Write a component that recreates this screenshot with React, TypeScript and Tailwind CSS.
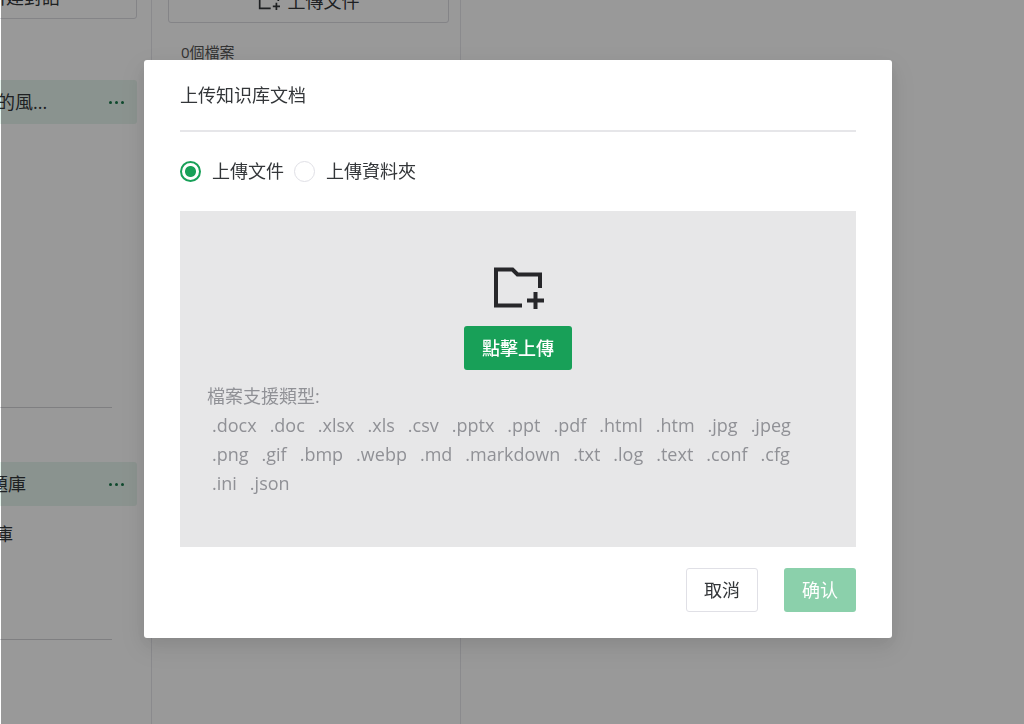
import React, { useState } from "react";

const FILE_TYPES = [
  ".docx", ".doc", ".xlsx", ".xls", ".csv", ".pptx", ".ppt", ".pdf", ".html", ".htm", ".jpg", ".jpeg",
  ".png", ".gif", ".bmp", ".webp", ".md", ".markdown", ".txt", ".log", ".text", ".conf", ".cfg",
  ".ini", ".json",
];

function FolderAddIcon({ className }: { className?: string }) {
  return (
    <svg className={className} viewBox="0 0 52 44" fill="none" stroke="currentColor" strokeWidth={4} aria-hidden="true">
      <path d="M30 39.5H4V3.5h16.5l5 5H48V22" />
      <path d="M43.5 26v17M35 34.5h17" />
    </svg>
  );
}

function MoreButton() {
  return (
    <button type="button" aria-label="More" className="flex items-center gap-[3px] text-[#18794a]">
      <span className="size-[3px] rounded-full bg-current" />
      <span className="size-[3px] rounded-full bg-current" />
      <span className="size-[3px] rounded-full bg-current" />
    </button>
  );
}

function Sidebar() {
  return (
    <aside className="flex w-[152px] shrink-0 justify-end overflow-hidden border-r border-[#e6e6eb] pr-[14px]">
      <div className="-mt-[25px] flex w-[226px] shrink-0 flex-col">
        <button type="button" className="h-11 rounded-[3px] border border-[#dcdce2] text-lg">
          新建對話
        </button>
        <div className="mt-[61px] flex h-11 items-center justify-between rounded-[3px] bg-[#e7f5ee] pr-[13px] pl-[86px]">
          <span>的風...</span>
          <MoreButton />
        </div>
        <hr className="mt-[283px] mr-[25px] border-[#d4d4d8]" />
        <div className="mt-[54px] flex h-11 items-center justify-between rounded-[3px] bg-[#e7f5ee] pr-[13px] pl-[79px]">
          <span>題庫</span>
          <MoreButton />
        </div>
        <div className="mt-[6px] flex h-11 items-center pl-[84px]">庫</div>
        <hr className="mt-[83px] mr-[25px] border-[#d4d4d8]" />
      </div>
    </aside>
  );
}

function FilePanel() {
  return (
    <section className="w-[309px] shrink-0 border-r border-[#e6e6eb] pr-[11px] pl-4">
      <button
        type="button"
        className="-mt-[21px] flex h-11 w-full items-center justify-center gap-2 rounded-[3px] border border-[#dcdce2] text-lg"
      >
        <FolderAddIcon className="h-5 w-[22px]" />
        上傳文件
      </button>
      <p className="mt-[18px] pl-[13px] text-[15px] leading-[22px] text-[#555]">0個檔案</p>
    </section>
  );
}

interface UploadModalProps {
  mode: string;
  onModeChange: (mode: string) => void;
}

function UploadModal({ mode, onModeChange }: UploadModalProps) {
  const radioClass =
    "size-[21px] appearance-none rounded-full border border-[#e0e0e6] bg-white checked:border-2 checked:border-[#18a058] checked:bg-[radial-gradient(circle,#18a058_5px,white_6px)]";

  return (
    <div className="fixed inset-y-0 right-0 left-px overflow-y-auto bg-black/40 pt-[60px] pr-[132px] pl-[143px]">
      <div
        role="dialog"
        aria-labelledby="upload-title"
        className="rounded-[3px] bg-white px-9 pt-[22px] pb-[26px] shadow-[0_9px_28px_8px_rgba(0,0,0,0.05),0_6px_16px_0_rgba(0,0,0,0.08)]"
      >
        <h2 id="upload-title" className="border-b-2 border-[#e6e6e9] pb-[22px] leading-[26px]">
          上传知识库文档
        </h2>

        <div className="mt-[25px] flex items-center gap-[10px] leading-[28px]">
          <label className="flex items-center gap-[11px]">
            <input
              type="radio"
              name="mode"
              className={radioClass}
              checked={mode === "file"}
              onChange={() => onModeChange("file")}
            />
            上傳文件
          </label>
          <label className="flex items-center gap-[11px]">
            <input
              type="radio"
              name="mode"
              className={radioClass}
              checked={mode === "folder"}
              onChange={() => onModeChange("folder")}
            />
            上傳資料夾
          </label>
        </div>

        <div className="mt-[26px] flex flex-col items-center bg-[#e7e7e8] px-[27px] pt-[55px] pb-[49px]">
          <FolderAddIcon className="h-11 w-[52px] text-[#27272a]" />
          <button type="button" className="mt-4 h-11 rounded-[3px] bg-[#18a058] px-[18px] font-medium text-white">
            點擊上傳
          </button>
          <div className="mt-3 w-full leading-[29px] text-[#909196]">
            <p>檔案支援類型:</p>
            <ul className="flex flex-wrap gap-x-[13px] px-[5px]">
              {FILE_TYPES.map((type) => (
                <li key={type}>{type}</li>
              ))}
            </ul>
          </div>
        </div>

        <div className="mt-[21px] flex justify-end gap-[26px]">
          <button type="button" className="h-11 rounded-[3px] border border-[#e0e0e6] px-[17px]">
            取消
          </button>
          <button type="button" disabled className="h-11 rounded-[3px] bg-[#8bd0ab] px-[18px] text-white">
            确认
          </button>
        </div>
      </div>
    </div>
  );
}

export default function App() {
  const [mode, setMode] = useState("file");

  return (
    <div className="flex h-screen overflow-hidden bg-white font-['Open_Sans','Noto_Sans_CJK_TC',sans-serif] text-lg text-[#333639]">
      <Sidebar />
      <FilePanel />
      <UploadModal mode={mode} onModeChange={setMode} />
    </div>
  );
}
